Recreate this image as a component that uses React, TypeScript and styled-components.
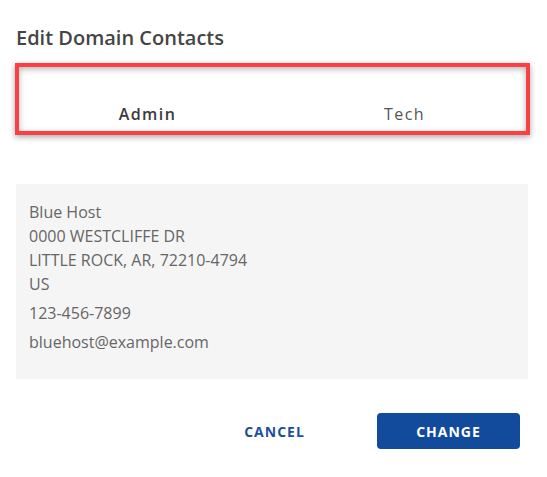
import React, {FC, useState} from 'react';
import styled, {createGlobalStyle} from "styled-components";

const GlobalStyle = createGlobalStyle`
  body {
    margin: 0;
    background: #ffffff;
    font-family: "Open Sans", "Liberation Sans", sans-serif;
  }
`
const Modal = styled.div`
  width: 547px;
  height: 477px;
  box-sizing: border-box;
  padding: 25px 19px 0 16px;
  background: #ffffff;
`
const Title = styled.h2`
  margin: 0;
  font-size: 20px;
  line-height: 25px;
  font-weight: 600;
  color: #454545;
`
const TabsFrame = styled.div`
  width: 515px;
  height: 72px;
  box-sizing: border-box;
  margin: 13px 0 0 -1px;
  border: 4px solid #f94144;
  box-shadow: 0 2px 6px rgba(0, 0, 0, 0.35), inset 0 2px 6px rgba(0, 0, 0, 0.3);
  display: grid;
  grid-template-columns: 257px 257px;
  align-items: end;
  padding: 0 0 6px 0;
`
const Tab = styled.button<{ $active?: boolean }>`
  border: none;
  background: none;
  padding: 0;
  font-family: inherit;
  font-size: 16px;
  line-height: 22px;
  letter-spacing: 1.4px;
  font-weight: ${props => props.$active ? 600 : 400};
  color: ${props => props.$active ? '#3a3a3a' : '#555555'};
  cursor: pointer;
`
const ContactCard = styled.div`
  margin-top: 49px;
  width: 512px;
  height: 195px;
  box-sizing: border-box;
  padding: 16px 13px;
  background: #f5f5f5;
  color: #666666;
  font-size: 16px;
  line-height: 24px;
`
const Address = styled.div`
  margin: 0;
`
const Line = styled.p`
  margin: 5px 0 0 0;
`
const Actions = styled.div`
  display: flex;
  justify-content: flex-end;
  gap: 31px;
  margin-top: 34px;
  padding-right: 8px;
`
const ActionButton = styled.button<{ $primary?: boolean }>`
  width: 143px;
  height: 36px;
  border: none;
  border-radius: 4px;
  background: ${props => props.$primary ? '#134b9c' : 'transparent'};
  color: ${props => props.$primary ? '#ffffff' : '#1d4f9c'};
  font-family: inherit;
  font-size: 14px;
  font-weight: 700;
  letter-spacing: 1px;
  cursor: pointer;
`

const tabs = ['Admin', 'Tech'];

export const App: FC = () => {
  const [active, setActive] = useState('Admin');

  return (
    <>
      <GlobalStyle/>
      <Modal>
        <Title>Edit Domain Contacts</Title>
        <TabsFrame>
          {tabs.map(tab => (
            <Tab key={tab} $active={tab === active} onClick={() => setActive(tab)}>
              {tab}
            </Tab>
          ))}
        </TabsFrame>
        <ContactCard>
          <Address>
            Blue Host<br/>
            0000 WESTCLIFFE DR<br/>
            LITTLE ROCK, AR, 72210-4794<br/>
            US
          </Address>
          <Line>123-456-7899</Line>
          <Line>bluehost@example.com</Line>
        </ContactCard>
        <Actions>
          <ActionButton>CANCEL</ActionButton>
          <ActionButton $primary>CHANGE</ActionButton>
        </Actions>
      </Modal>
    </>
  );
};

export default App;
